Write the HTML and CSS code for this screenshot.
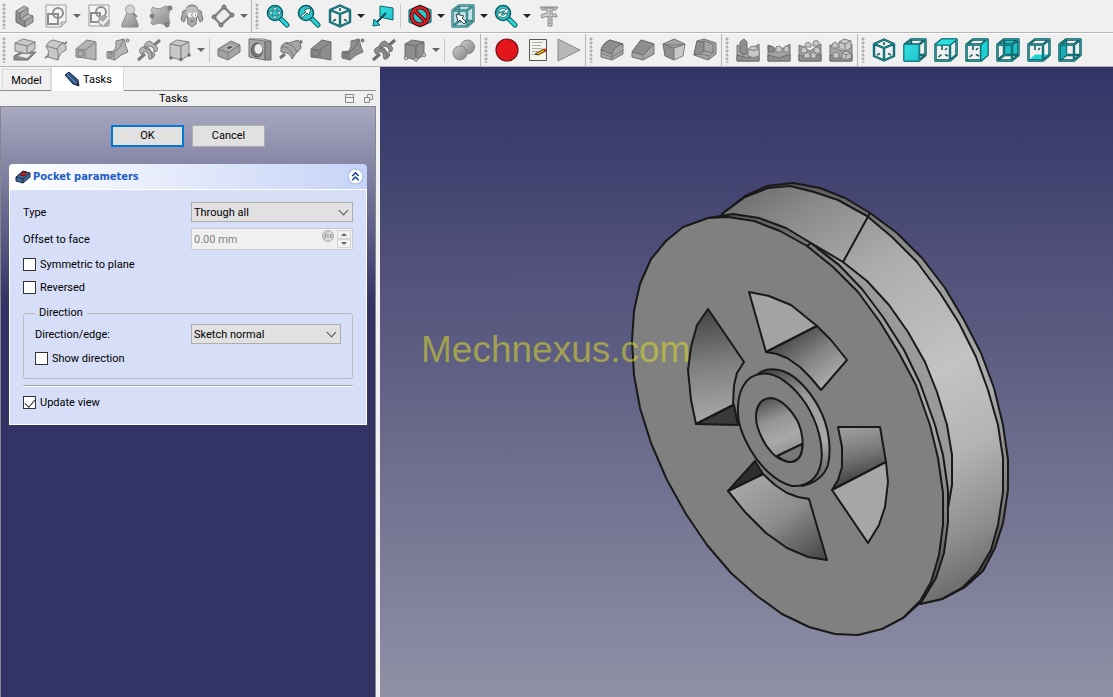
FILE: index.html
```html
<!DOCTYPE html>
<html lang="en">
<head>
<meta charset="utf-8">
<meta name="viewport" content="width=device-width, initial-scale=1">
<title>Pocket parameters</title>
<link rel="stylesheet" href="styles.css">
</head>
<body>
<svg class="defs" aria-hidden="true">
  <defs>
    <linearGradient id="teal" x1="0" y1="0" x2="1" y2="1"><stop offset="0" stop-color="#34e0e2"/><stop offset="1" stop-color="#20c4ca"/></linearGradient>
    <linearGradient id="grey" x1="0" y1="0" x2="1" y2="1"><stop offset="0" stop-color="#c9c9c9"/><stop offset="1" stop-color="#858585"/></linearGradient>
    <path id="iso" d="M12 1.500L22 6V18L12 22.500L2 18V6ZM2 6L12 10L22 6M12 10V22"/>
    <path id="box" d="M1.500 6.500H16V22.500H1.500ZM1.500 6.500L8 1.500H22.500V17L16 22.500M16 6.500L22.500 1.500"/>
    <path id="boxback" d="M8 2V17H22M8 17L2 22"/>
    <g id="isocube"><path class="axis" d="M12 4V7M5 17L8 15.500M19 17L16 15.500"/><use href="#iso" class="tube-out"/><use href="#iso" class="tube-in"/></g>
    <g id="boxfront"><use href="#box" class="tube-out"/><use href="#box" class="tube-in"/></g>
    <g id="boxrear"><use href="#boxback" class="tube-out"/><use href="#boxback" class="tube-in"/></g>
    <path id="ticks" class="axis" d="M8 8V12M4.500 19L7.500 16.500M11 16.500L14 18M11 12L13 10"/>
    <g id="lens"><path class="handle-out" d="M14 14L21 21"/><path class="handle-in" d="M14 14L21 21"/><circle cx="9" cy="9" r="7.500" fill="#2fc6cb" stroke="#0a6266" stroke-width="1.600"/></g>
    <g id="wheelpad"><path class="g" d="M1 18V7L6 9L12 13L23 6V23H1Z"/><path class="d" d="M1 17L12 20L23 16V23H1Z"/></g>
    <g id="loft"><path d="M1 11L12 2L21 4V22L10 20L1 19Z"/><path d="M1 11L10 12L21 4M10 12V20"/><path d="M3 13H8V18H3Z"/></g>
    <g id="sweep"><path d="M1 14L8 13Q11 9 10 3L18 1Q20 10 22 14Q15 16 9 22L1 20Z"/><path d="M1 14L8 15V21M8 15Q15 10 18 1"/><path d="M3 16H6V19H3Z"/><circle cx="21.500" cy="2.500" r="1.500"/></g>
    <g id="helix"><path d="M1 22L8 16M15 9L23 2" class="shaft"/><path d="M4 16Q0 11 6 9Q13 8 14 14L15 20Q17 15 12 12L7 10Q7 4 13 3L18 7Q22 9 20 13L17 14Q18 9 12 8Q8 8 10 11L18 16Q16 22 12 21L11 15Q7 12 5 16Z"/></g>
    <g id="revolve"><path d="M1 20L6 16M18 7L23 3" class="shaft"/><path d="M2 9Q5 3 10 5L19 2Q22 4 22 10Q20 13 18 14L13 21Q11 14 2 14Z"/><path d="M2 9Q10 7 14 18M7 5Q15 7 18 14"/></g>
    <g id="primitive"><path d="M2 6L13 8V22L2 19Z"/><path d="M2 6L9 2L21 4L13 8Z"/><path d="M13 8L21 4V17L13 22Z"/></g>
    <g id="corners"><circle cx="3" cy="20" r="1.800"/><circle cx="13" cy="21.500" r="1.800"/><circle cx="21" cy="17" r="1.800"/></g>
  </defs>
</svg>

<header class="toolbars">
  <div class="toolbar-row">
    <div class="toolbar">
      <span class="grip"></span>
      <button class="tool" aria-label="Body"><svg viewBox="0 0 24 24"><path class="d" d="M3 7L7 9V15L12 17V23L3 18Z"/><path class="m" d="M3 7L11 2L15 4L7 9ZM7 15L15 10L20 12L12 17Z"/><path class="g" d="M7 9L15 4V10L7 15ZM12 17L20 12V18L12 23Z"/></svg></button>
      <button class="tool" aria-label="Create sketch"><svg viewBox="0 0 24 24"><path d="M2 1H22V18L17 23H2Z" fill="#f4f4f4" stroke="#9b9b9b"/><path d="M17 23V18H22" fill="#ccc" stroke="#9b9b9b"/><rect class="sk" x="4" y="10" width="10" height="10"/><circle class="sk" cx="14" cy="9" r="5"/></svg></button>
      <button class="menu-arrow off" aria-label="Sketch menu"></button>
      <button class="tool" aria-label="Validate sketch"><svg viewBox="0 0 24 24"><path d="M2 1H22V22H2Z" fill="#f4f4f4" stroke="#9b9b9b"/><rect class="sk" x="4" y="9" width="9" height="9"/><circle class="sk" cx="14" cy="8" r="5"/><circle cx="17" cy="17" r="6" fill="#aaa"/><path d="M13 17L16 20L22 13" fill="none" stroke="#eee" stroke-width="2.500"/></svg></button>
      <button class="tool" aria-label="Check geometry"><svg viewBox="0 0 24 24"><path d="M9 9H15L20 20V23H4V20Z" fill="url(#grey)" stroke="#8a8a8a"/><path d="M15 9L19 13" stroke="#888" stroke-width="2"/><circle cx="12" cy="5.500" r="4.500" fill="#d6d6d6" stroke="#999"/></svg></button>
      <button class="tool" aria-label="Shape binder"><svg viewBox="0 0 24 24"><path d="M4 3Q10 7 16 2L22 3Q18 11 21 19Q18 21 18 22L14 20Q9 18 4 21Q1 20 3 16Q5 10 2 6Z" fill="url(#grey)" stroke="#999"/><circle class="d" cx="3" cy="12" r="2"/><circle class="d" cx="21" cy="4" r="2"/><circle class="d" cx="18" cy="21" r="2"/></svg></button>
      <button class="tool" aria-label="Clone"><svg viewBox="0 0 24 24"><path d="M6 6Q7 1 12 1T18 6L21 7L23 16L20 18L17 11L16 20L12 23L8 20L7 11L4 18L1 16L3 7Z" fill="#aaa" stroke="#777"/><path d="M6 5Q12 0 18 5L17 12H7Z" fill="#bebebe"/><circle cx="10" cy="11" r="2.400" fill="#eee"/><circle cx="15" cy="11" r="2.400" fill="#eee"/><path d="M11 11H12M15 11H16M10 16L12 18L14 16" stroke="#666" fill="none"/></svg></button>
      <button class="tool" aria-label="Datum plane"><svg viewBox="0 0 24 24"><path d="M3 13L13 3L21 11L10 21Z" fill="#eee" stroke="#888" stroke-width="2.500"/><g class="d"><circle cx="3" cy="13" r="2"/><circle cx="13" cy="3" r="2"/><circle cx="21" cy="11" r="2"/><circle cx="10" cy="21" r="2"/></g></svg></button>
      <button class="menu-arrow off" aria-label="Datum menu"></button>
    </div>
    <div class="toolbar last">
      <span class="grip"></span>
      <button class="tool" aria-label="Fit all"><svg viewBox="0 0 24 24"><use href="#lens"/><path d="M9 3L11.500 6H6.500ZM9 15L11.500 12H6.500ZM3 9L6 6.500V11.500ZM15 9L12 6.500V11.500Z" fill="#fff" stroke="#174b4d" stroke-width=".7"/></svg></button>
      <button class="tool" aria-label="Fit selection"><svg viewBox="0 0 24 24"><use href="#lens"/><path d="M4 12L9 8L7 6L14 4L12 11L10 9L5 14Z" fill="#fff" stroke="#174b4d" stroke-width=".8"/></svg></button>
      <button class="tool" aria-label="Isometric view"><svg viewBox="0 0 24 24"><use href="#isocube"/></svg></button>
      <button class="menu-arrow" aria-label="View menu"></button>
      <button class="tool" aria-label="Align to selection"><svg viewBox="0 0 24 24"><path d="M9 2L22 4V16L9 13Z" fill="url(#teal)" stroke="#0a6266"/><path d="M15 9L5 19" stroke="#0a5357" stroke-width="2.200"/><path d="M2 22L3 15L9 21Z" fill="#22cdd1" stroke="#0a6266"/></svg></button>
      <span class="divider"></span>
      <button class="tool" aria-label="Draw style"><svg viewBox="0 0 24 24"><path d="M12 1L23 6V18L12 23L1 18V6Z" fill="#2bc7cb" stroke="#075559"/><circle cx="12" cy="12" r="8.500" fill="none" stroke="#3b0c0c" stroke-width="4"/><path d="M6 6L18 18" stroke="#3b0c0c" stroke-width="4"/><circle cx="12" cy="12" r="8.500" fill="none" stroke="#df1c22" stroke-width="2.400"/><path d="M6 6L18 18" stroke="#df1c22" stroke-width="2.400"/></svg></button>
      <button class="menu-arrow" aria-label="Draw style menu"></button>
      <button class="tool" aria-label="Box selection"><svg viewBox="0 0 24 24"><path d="M2 7L8 2H22V17L16 22H2Z" fill="#c4e4e5"/><g class="muted"><use href="#boxrear"/><use href="#boxfront"/></g><path d="M5 10L13 12L11 14L15 18L13 20L9 16L7 18Z" fill="#fff" stroke="#345"/></svg></button>
      <button class="menu-arrow" aria-label="Selection menu"></button>
      <button class="tool" aria-label="Refresh view"><svg viewBox="0 0 24 24"><use href="#lens"/><path d="M4 8Q8 2 12 6L14 4V9H9L11 7Q8 6 7 8ZM14 10Q10 16 6 12L4 14V9H9L7 11Q10 12 11 10Z" fill="#fff" stroke="#174b4d" stroke-width=".6"/></svg></button>
      <button class="menu-arrow" aria-label="Refresh menu"></button>
      <button class="tool" aria-label="Measure"><svg viewBox="0 0 24 24"><path d="M3 3H21L19 6H15V10H19L20 13L15 12V22H11V12L5 14L4 11L10 9V6H5Z" fill="#d0d0d0" stroke="#888"/><path d="M12 7H14M12 10H14M12 13H14M12 16H14M12 19H14M6 4H18" stroke="#777"/></svg></button>
    </div>
  </div>
  <div class="toolbar-row">
    <div class="toolbar">
      <span class="grip"></span>
      <button class="tool" aria-label="Pad"><svg viewBox="0 0 24 24"><path class="d" d="M1 18L8 14H23L15 22H1Z"/><path fill="#eee" d="M5 18L9 16H18L14 20Z"/><path class="l" d="M2 5L10 1L22 4V11L14 16L2 13Z"/><path class="line" d="M2 5L14 8L22 4M14 8V16"/></svg></button>
      <button class="tool" aria-label="Revolution"><svg viewBox="0 0 24 24"><path d="M1 20L23 4" class="line wide"/><path class="l" d="M2 8Q5 2 9 2L20 5Q23 8 22 12Q15 15 14 22L4 19Q6 13 2 8Z"/><path class="line" d="M2 8L13 11Q15 6 20 5M13 11Q15 15 14 22"/></svg></button>
      <button class="tool" aria-label="Additive loft"><svg viewBox="0 0 24 24"><use class="m" href="#loft"/></svg></button>
      <button class="tool" aria-label="Additive pipe"><svg viewBox="0 0 24 24"><use class="m" href="#sweep"/></svg></button>
      <button class="tool" aria-label="Additive helix"><svg viewBox="0 0 24 24"><use class="m" href="#helix"/></svg></button>
      <button class="tool" aria-label="Additive primitive"><svg viewBox="0 0 24 24"><use class="l" href="#primitive"/><use class="dark" href="#corners"/></svg></button>
      <button class="menu-arrow off" aria-label="Additive menu"></button>
      <span class="divider"></span>
      <button class="tool" aria-label="Pocket"><svg viewBox="0 0 24 24"><path class="g" d="M1 11L14 3L23 7V14L11 22L1 18Z"/><path class="line" d="M1 11L11 15L23 7M11 15V22"/><path d="M8 10L13 7L17 9L12 12Z" fill="#606060" stroke="#ccc"/></svg></button>
      <button class="tool" aria-label="Hole"><svg viewBox="0 0 24 24"><path class="g" d="M1 1L17 3V22L1 19Z"/><path class="d" d="M17 3L23 3V22H17Z"/><path class="line" d="M1 1H15L23 3"/><ellipse cx="9" cy="12" rx="5.500" ry="7" fill="#777" stroke="#555"/><ellipse cx="10.500" cy="11" rx="4" ry="5" fill="#ececec"/></svg></button>
      <button class="tool" aria-label="Groove"><svg viewBox="0 0 24 24"><use class="g" href="#revolve"/></svg></button>
      <button class="tool" aria-label="Subtractive loft"><svg viewBox="0 0 24 24"><use class="d" href="#loft"/></svg></button>
      <button class="tool" aria-label="Subtractive pipe"><svg viewBox="0 0 24 24"><use class="d" href="#sweep"/></svg></button>
      <button class="tool" aria-label="Subtractive helix"><svg viewBox="0 0 24 24"><use class="d" href="#helix"/></svg></button>
      <button class="tool" aria-label="Subtractive primitive"><svg viewBox="0 0 24 24"><use class="d" href="#primitive"/><use class="l" href="#corners"/></svg></button>
      <button class="menu-arrow off" aria-label="Subtractive menu"></button>
      <span class="divider"></span>
      <button class="tool" aria-label="Boolean"><svg viewBox="0 0 24 24"><circle cx="15.500" cy="9" r="7" fill="url(#grey)" stroke="#888"/><circle cx="8" cy="15" r="7" fill="url(#grey)" stroke="#888"/></svg></button>
    </div>
    <div class="toolbar">
      <span class="grip"></span>
      <button class="tool" aria-label="Record macro"><svg viewBox="0 0 24 24"><circle cx="12" cy="12" r="11" fill="#e3171b" stroke="#7a1214" stroke-width="1.200"/></svg></button>
      <button class="tool" aria-label="Macros"><svg viewBox="0 0 24 24"><path d="M3.500 1.500H20.500V22.500H3.500Z" fill="#f5f5ee" stroke="#555"/><path d="M6 4.500H17M6 7.500H15M6 10.500H16M6 13.500H12M6 16.500H10" stroke="#aaa"/><path d="M9 16L18 11L20 13L12 17Z" fill="#eab414" stroke="#4b3b16"/><path d="M18 11L20 13" stroke="#c22" stroke-width="2"/></svg></button>
      <button class="tool" aria-label="Run macro"><svg viewBox="0 0 24 24"><path d="M1 1V23L23 12Z" fill="#b8b8b8" stroke="#888"/></svg></button>
    </div>
    <div class="toolbar">
      <span class="grip"></span>
      <button class="tool" aria-label="Fillet"><svg viewBox="0 0 24 24"><path class="g" d="M1 19V12Q3 5 10 2L23 6V16L12 22Z"/><path class="d" d="M1 12Q3 5 10 2L23 6Q14 8 12 16Z"/><path class="line" d="M1 15L12 19L23 12M12 16V22"/></svg></button>
      <button class="tool" aria-label="Chamfer"><svg viewBox="0 0 24 24"><path class="g" d="M1 19V14L10 2L23 6V16L12 22Z"/><path class="d" d="M1 14L10 2L23 6L12 17Z"/><path class="line" d="M12 17V22"/></svg></button>
      <button class="tool" aria-label="Draft"><svg viewBox="0 0 24 24"><path class="d" d="M1 6L12 10V22L3 18Z"/><path class="l" d="M12 10L23 6L21 18L12 22Z"/><path class="g" d="M1 6L12 1L23 6L12 10Z"/><path class="line" d="M1 6L12 7L23 6"/></svg></button>
      <button class="tool" aria-label="Thickness"><svg viewBox="0 0 24 24"><path class="g" d="M4 3L11 1L23 5V16L15 22L1 17Z"/><path class="d" d="M8 4L11 3V13L7 16L1 17L4 3Z"/><path class="g" d="M11 3L20 6V15L11 13Z"/><path class="line" d="M7 16L16 18L20 15M16 18L15 22"/></svg></button>
    </div>
    <div class="toolbar">
      <span class="grip"></span>
      <button class="tool" aria-label="Mirrored"><svg viewBox="0 0 24 24"><use href="#wheelpad"/><path class="d" d="M4 4L8 1L11 4V15L7 17L4 14Z"/><path class="l" d="M12 11Q17 5 23 11V18Q17 21 12 18Z"/><path class="line" d="M12 11Q17 14 23 11"/></svg></button>
      <button class="tool" aria-label="Linear pattern"><svg viewBox="0 0 24 24"><use href="#wheelpad"/><g class="l"><path class="d" d="M1 9L5 8L7 10V14L2 14Z"/><path d="M9 9L12 8L15 10V14H9ZM17 9L20 8L22 10V14H17Z"/></g></svg></button>
      <button class="tool" aria-label="Polar pattern"><svg viewBox="0 0 24 24"><use href="#wheelpad"/><g class="l"><path d="M7 6L10 4L13 6V9H7ZM15 4L18 2L21 4V8H15ZM3 11L6 9L9 11V15H3ZM16 10L19 9L22 11V15H16ZM6 16L9 14L12 16V20H6ZM13 15L16 14L18 16V20H13Z"/></g></svg></button>
      <button class="tool" aria-label="Multi transform"><svg viewBox="0 0 24 24"><use href="#wheelpad"/><g class="l"><path d="M10 4L15 1L22 3V10L16 13L10 10ZM3 6L6 4L9 6V10H3ZM4 16L7 14L10 16V20H4ZM13 15L17 13L22 15V20L17 22L13 20Z"/></g><path class="line" d="M10 4L16 6L22 3M16 6V13M13 15L17 17L22 15M17 17V22"/></svg></button>
    </div>
    <div class="toolbar last">
      <span class="grip"></span>
      <button class="tool" aria-label="Axonometric"><svg viewBox="0 0 24 24"><use href="#isocube"/></svg></button>
      <button class="tool" aria-label="Front"><svg viewBox="0 0 24 24"><use href="#boxrear"/><use href="#boxfront"/><path d="M1 6.500H16V23H1Z" fill="url(#teal)" stroke="#0c8388"/></svg></button>
      <button class="tool" aria-label="Top"><svg viewBox="0 0 24 24"><use href="#ticks"/><use href="#boxfront"/><path d="M1 7L8 1H23L16 7Z" fill="#2ddde0" stroke="#0c8388"/></svg></button>
      <button class="tool" aria-label="Right"><svg viewBox="0 0 24 24"><use href="#ticks"/><use href="#boxfront"/><path d="M16 7L23 1V17L16 23Z" fill="#20cfd3" stroke="#0c7478"/></svg></button>
      <button class="tool" aria-label="Rear"><svg viewBox="0 0 24 24"><path d="M8 2H22V17H8Z" fill="#1fbfc4"/><use href="#boxrear"/><use href="#boxfront"/></svg></button>
      <button class="tool" aria-label="Bottom"><svg viewBox="0 0 24 24"><path d="M2 22L8 16.500H22L16 22Z" fill="#20d5d8"/><path class="axis" d="M8 8V12M11 12L13 10"/><use href="#boxfront"/></svg></button>
      <button class="tool" aria-label="Left"><svg viewBox="0 0 24 24"><use href="#boxrear"/><path d="M2 7L8 2V17L2 22Z" fill="#1aaeb4"/><use href="#boxfront"/></svg></button>
    </div>
  </div>
</header>

<main class="workspace">
  <aside class="side">
    <nav class="tabs">
      <button class="tab">Model</button>
      <button class="tab active"><svg class="pencil" viewBox="0 0 16 16"><path d="M1 4L5 1L14 9L15 15L9 13Z" fill="#31558a" stroke="#182b48"/><path d="M3 3L12 12" stroke="#6f92c5"/><path d="M12 14L15 15L14 11Z" fill="#3b3022"/></svg>Tasks</button>
    </nav>
    <div class="dock-title">
      <span class="dock-name">Tasks</span>
      <button class="dock-btn" aria-label="Collapse"><svg viewBox="0 0 9 9"><path d="M.5 .5H8.500V8.500H.5ZM.5 3.500H8.500"/></svg></button>
      <button class="dock-btn" aria-label="Float"><svg viewBox="0 0 9 9"><path d="M.5 3.500H5.500V8.500H.5ZM3.500 3.500V.5H8.500V5.500H5.500"/></svg></button>
    </div>
    <section class="tasks">
      <div class="actions">
        <button class="btn primary">OK</button>
        <button class="btn">Cancel</button>
      </div>
      <form class="card">
        <h2 class="card-head">
          <svg class="card-icon" viewBox="0 0 16 14"><path d="M1 7L8 1L15 3V7L8 13L1 11Z" fill="#426a9c" stroke="#172a43"/><path d="M1 7L8 9L15 3M8 9V13" fill="none" stroke="#172a43"/><path d="M5 5L8 2L12 3L9 6Z" fill="#d61f1f" stroke="#651414"/></svg>
          <span class="card-title">Pocket parameters</span>
          <button type="button" class="fold" aria-label="Collapse parameters"><svg viewBox="0 0 16 16"><circle cx="8" cy="8" r="7" fill="#fff" stroke="#a9b6dd"/><path d="M5 7.500L8 4.500L11 7.500M5 11.500L8 8.500L11 11.500" fill="none" stroke="#173f9b" stroke-width="1.500"/></svg></button>
        </h2>
        <div class="card-body">
          <div class="field"><label for="type">Type</label><select id="type"><option>Through all</option></select></div>
          <div class="field offset"><label for="offset">Offset to face</label>
            <div class="spin"><input id="offset" type="text" value="0.00 mm" disabled>
              <svg class="fx" viewBox="0 0 12 12"><circle cx="6" cy="6" r="5.500" fill="#ddd" stroke="#aaa"/><path d="M3 9V5Q3 3 5 3M2 6H5M6 4V8M8 4L10 8M10 4L8 8" fill="none" stroke="#999"/></svg>
              <div class="steps"><button type="button" disabled aria-label="Increase"><i class="up"></i></button><button type="button" disabled aria-label="Decrease"><i class="down"></i></button></div>
            </div>
          </div>
          <label class="check"><input type="checkbox">Symmetric to plane</label>
          <label class="check"><input type="checkbox">Reversed</label>
          <fieldset class="group">
            <legend>Direction</legend>
            <div class="field"><label for="edge">Direction/edge:</label><select id="edge"><option>Sketch normal</option></select></div>
            <label class="check"><input type="checkbox">Show direction</label>
          </fieldset>
          <hr>
          <label class="check"><input type="checkbox" checked>Update view</label>
        </div>
      </form>
    </section>
  </aside>

  <section class="viewport" aria-label="3D view">
    <svg class="scene" viewBox="380 67 733 630" preserveAspectRatio="xMidYMid meet">
      <defs>
        <linearGradient id="groove" gradientUnits="userSpaceOnUse" x1="730" y1="200" x2="960" y2="600">
          <stop offset="0" stop-color="#707070"/><stop offset=".1" stop-color="#8a8a8a"/><stop offset=".28" stop-color="#acacac"/><stop offset=".55" stop-color="#c3c3c3"/><stop offset=".72" stop-color="#b4b4b4"/><stop offset=".88" stop-color="#8e8e8e"/><stop offset="1" stop-color="#666"/>
        </linearGradient>
        <linearGradient id="rim" gradientUnits="userSpaceOnUse" x1="780" y1="185" x2="960" y2="600">
          <stop offset="0" stop-color="#555"/><stop offset=".3" stop-color="#999"/><stop offset=".6" stop-color="#acacac"/><stop offset=".85" stop-color="#777"/><stop offset="1" stop-color="#333"/>
        </linearGradient>
        <linearGradient id="p1" gradientUnits="userSpaceOnUse" x1="795" y1="332" x2="828" y2="380"><stop offset="0" stop-color="#4a4a4a"/><stop offset=".5" stop-color="#808080"/><stop offset="1" stop-color="#a8a8a8"/></linearGradient>
        <linearGradient id="p2" gradientUnits="userSpaceOnUse" x1="704" y1="309" x2="718" y2="418"><stop offset="0" stop-color="#424242"/><stop offset=".5" stop-color="#7e7e7e"/><stop offset="1" stop-color="#a6a6a6"/></linearGradient>
        <linearGradient id="p3" gradientUnits="userSpaceOnUse" x1="750" y1="475" x2="812" y2="562"><stop offset="0" stop-color="#a8a8a8"/><stop offset=".5" stop-color="#8c8c8c"/><stop offset="1" stop-color="#4c4c4c"/></linearGradient>
        <linearGradient id="p4" gradientUnits="userSpaceOnUse" x1="852" y1="425" x2="866" y2="482"><stop offset="0" stop-color="#a0a0a0"/><stop offset=".5" stop-color="#787878"/><stop offset="1" stop-color="#3d3d3d"/></linearGradient>
        <linearGradient id="bore" gradientUnits="userSpaceOnUse" x1="767" y1="397" x2="793" y2="460"><stop offset="0" stop-color="#4e4e4e"/><stop offset=".35" stop-color="#949494"/><stop offset=".65" stop-color="#a9a9a9"/><stop offset="1" stop-color="#888"/></linearGradient>
        <linearGradient id="hub" gradientUnits="userSpaceOnUse" x1="768" y1="370" x2="822" y2="485"><stop offset="0" stop-color="#454545"/><stop offset=".3" stop-color="#9a9a9a"/><stop offset=".7" stop-color="#aaa"/><stop offset="1" stop-color="#555"/></linearGradient>
      </defs>
      <g class="model">
        <path fill="url(#rim)" d="M722 214L745 196L767 186L793 183L820 188L845 198L870 213L897 233L922 258L945 288L964 320L981 353L994 388L1003 425L1008 460L1008 490L1003 523L995 548L983 571L965 587L942 599L920 604Z"/>
        <path fill="url(#groove)" d="M722 214L745 197L768 188L790 186L814 192L838 200L867 216L892 237L917 262L940 293L959 323L976 357L988 390L998 425L1003 458L1003 492L998 525L991 550L978 572L962 588L942 599L920 604Z"/>
        <path class="edge" d="M870 213L843 262L838 265"/>
        <path fill="#9a9a9a" d="M811 243L843 262L867 281L889 305L908 332L925 362L937 392L947 425L952 455L952 485L948 508L930 580L700 400Z"/>
        <path fill="url(#rim)" d="M708 218L733 214L759 218L786 228L811 243L839 265L862 289L883 317L904 350L920 383L935 425L943 455L948 490L948 522L944 553L936 578L922 601L903 618Z"/>
        <path fill="#808080" d="M708 218L683 227L666 241L651 259L640 284L634 311L632 341L634 375L640 408L651 443L667 480L686 514L707 545L731 573L757 596L782 614L809 627L835 634L858 635L882 629L903 618L920 601L931 582L939 555L943 525L943 493L938 458L930 425L916 385L899 353L880 322L858 292L833 267L807 246L780 231L754 221L728 217Z"/>
        <path class="edge" d="M807 246L811 243M817 248L839 265"/>

        <path fill="#a3a3a3" d="M749 292L769 296L791 305L817 326L766 352Z"/>
        <path fill="url(#p1)" d="M817 326L831 340L847 360L821 390L811 378L800 367L787 358L777 354L766 352Z"/>
        <path fill="url(#p2)" d="M708 309L744 362L737 373L734 385L733 405L696 424L691 400L688 370L691 347L697 325Z"/>
        <path fill="#3a3a3a" d="M696 424L734 405L738 425Z"/>
        <path fill="url(#p3)" d="M728 491L745 512L766 533L787 548L808 557L827 560L809 499L798 497L787 493L775 485L763 474Z"/>
        <path fill="#2e2e2e" d="M755 461L763 474L728 491Z"/>
        <path fill="url(#p4)" d="M838 427L880 427L886 462L832 490L838 480L842 467L842 447Z"/>
        <path fill="#a6a6a6" d="M886 462L888 482L885 507L879 525L868 543L832 490Z"/>

        <path fill="url(#hub)" d="M758 374C764 369 773 368 783 371C799 377 814 396 822 414C830 432 831 452 828 465C824 477 815 483 802 486L775 450Z"/>
        <path fill="#808080" d="M738 413C737 392 745 376 760 374C776 371 794 386 806 404C818 423 824 446 821 463C818 479 807 487 792 486C775 482 759 465 750 449C742 435 738 424 738 413Z"/>
        <path fill="url(#bore)" d="M756 417C756 405 762 398 771 398C782 399 792 411 798 422C803 433 804 446 801 454C798 461 792 463 785 461C776 459 767 449 762 438C758 430 756 424 756 417Z"/>
        <path fill="#777" d="M777 456L802 444C803 455 798 462 789 462Q784 461 777 456Z"/>
      </g>
      <text class="watermark" x="421" y="362">Mechnexus.com</text>
    </svg>
  </section>
</main>
</body>
</html>
```
FILE: styles.css
```css
* { box-sizing: border-box; }

body {
  margin: 0;
  height: 100vh;
  display: flex;
  flex-direction: column;
  overflow: hidden;
  background: #f0f0f0;
  color: #000;
  font: 11px/14px Roboto, "Liberation Sans", sans-serif;
}

button, input, select { font: inherit; color: inherit; }
button { padding: 0; border: 0; background: none; }
.defs { position: absolute; width: 0; height: 0; }

/* Toolbars */
.toolbar-row {
  display: flex;
  height: 33px;
  border-bottom: 1px solid #b4b4b4;
}
.toolbar-row + .toolbar-row { height: 34px; border-top: 1px solid #fff; }
.toolbar {
  display: flex;
  align-items: center;
  padding-right: 1px;
  border-right: 1px solid #b4b4b4;
  margin-right: 1px;
}
.toolbar.last { border-right: 0; }
.grip {
  width: 9px;
  height: 26px;
  background: radial-gradient(circle at 4px 2px, #b0b0b0 1px, transparent 2px) 0 0 / 9px 4px;
}
.tool { display: grid; place-items: center; width: 31px; height: 30px; }
.tool svg { width: 24px; height: 24px; }
.divider { width: 1px; height: 24px; margin: 0 3px 0 2px; background: #c8c8c8; }
.menu-arrow { display: grid; place-items: center; width: 12px; height: 30px; }
.menu-arrow::before {
  content: "";
  border: 4px solid transparent;
  border-top-color: #222;
  border-bottom: 0;
}
.menu-arrow.off::before { border-top-color: #666; }

/* Icon paint */
.l { fill: #c8c8c8; stroke: #808080; }
.m { fill: #b4b4b4; stroke: #7c7c7c; }
.g { fill: #a4a4a4; stroke: #747474; }
.d { fill: #8e8e8e; stroke: #6c6c6c; }
.dark { fill: #707070; }
.line { fill: none; stroke: #7c7c7c; }
.wide { stroke-width: 2; }
.shaft { stroke-width: 3; }
.sk { fill: none; stroke: #8d8d8d; stroke-width: 2; }
.tube-out { fill: none; stroke: #0b5558; stroke-width: 2.4; stroke-linejoin: round; }
.tube-in { fill: none; stroke: #1fa3a8; stroke-width: .8; }
.axis { fill: none; stroke: #175c60; stroke-width: 1.6; }
.handle-out { stroke: #0a6266; stroke-width: 5; stroke-linecap: round; }
.handle-in { stroke: #2bd6da; stroke-width: 3; stroke-linecap: round; }
.muted { opacity: .75; }

/* Workspace */
.workspace { flex: 1; display: flex; min-height: 0; }
.side { flex: 0 0 380px; display: flex; flex-direction: column; padding-right: 4px; }
.tabs {
  display: flex;
  align-items: flex-end;
  height: 24px;
  padding-left: 2px;
  border-bottom: 1px solid #8e8e8e;
}
.tab {
  min-width: 49px;
  height: 21px;
  padding: 2px 8px 0;
  border: 1px solid #d9d9d9;
  border-bottom: 0;
}
.tab.active {
  display: flex;
  align-items: center;
  gap: 3px;
  min-width: 71px;
  height: 24px;
  margin-bottom: -1px;
  padding: 2px 11px 0 12px;
  border-top: 0;
  background: #fff;
}
.pencil { width: 16px; height: 16px; margin-bottom: 2px; }
.dock-title { display: flex; align-items: center; gap: 10px; height: 15px; padding-right: 3px; }
.dock-name { flex: 1; padding: 1px 0 0 12px; text-align: center; }
.dock-btn { display: flex; }
.dock-btn svg { width: 9px; height: 9px; fill: none; stroke: #888; }

.tasks {
  flex: 1;
  padding: 18px 8px;
  border: 1px solid #85858f;
  border-bottom: 0;
  background: linear-gradient(#a9a9c1, #333366 194px);
}
.actions { display: flex; justify-content: center; gap: 8px; }
.btn { width: 73px; height: 22px; border: 1px solid #adadad; background: #e1e1e1; }
.btn.primary { border: 2px solid #0078d7; }

.card { margin-top: 17px; }
.card-head {
  display: flex;
  align-items: center;
  height: 25px;
  margin: 0;
  padding: 0 3px 0 6px;
  gap: 2px;
  border-radius: 4px 4px 0 0;
  background: linear-gradient(90deg, #fff, #c6d3f7);
  color: #215dc6;
  font: bold 11px/14px "DejaVu Sans Condensed", "DejaVu Sans", sans-serif;
}
.card-icon { width: 16px; height: 14px; }
.card-title { flex: 1; padding-top: 1px; }
.fold { display: flex; }
.fold svg { width: 17px; height: 17px; }
.card-body {
  display: flex;
  flex-direction: column;
  padding: 12px 13px 14px;
  border: 1px solid #fff;
  background: #d6dff7;
}
.field { position: relative; display: flex; align-items: center; }
.field > label { flex: 1; padding-top: 2px; }
.field select, .spin { flex: 0 0 162px; min-width: 0; }
select {
  height: 20px;
  padding: 1px 2px 0;
  border: 1px solid #adadad;
  border-radius: 0;
  appearance: none;
  background: #e1e1e1;
}
.field:has(select)::after {
  content: "";
  position: absolute;
  right: 6px;
  top: 5px;
  width: 6px;
  height: 6px;
  border: solid #555;
  border-width: 0 1px 1px 0;
  transform: rotate(45deg);
  pointer-events: none;
}
.offset { margin: 6px 0 8px; }
.spin {
  display: flex;
  height: 22px;
  padding: 1px;
  border: 1px solid #ccc;
  background: #f0f0f0;
}
.spin input {
  flex: 1;
  width: 0;
  min-width: 0;
  padding: 2px 1px 0;
  border: 0;
  background: none;
  color: #838383;
}
.fx { width: 12px; height: 12px; margin-right: 3px; }
.steps { display: flex; flex-direction: column; width: 14px; }
.steps button { flex: 1; display: grid; place-items: center; border: 1px solid #d5d5d5; }
.up, .down { border: 3px solid transparent; }
.up { border-top: 0; border-bottom-color: #666; }
.down { border-bottom: 0; border-top-color: #666; }

.check { display: flex; align-items: center; gap: 4px; height: 13px; margin-bottom: 10px; }
.check input {
  appearance: none;
  display: grid;
  place-items: center;
  width: 13px;
  height: 13px;
  margin: 0;
  border: 1px solid #333;
  background: #fff;
}
.check input:checked::before {
  content: "";
  width: 5px;
  height: 9px;
  margin-bottom: 3px;
  border: solid #333;
  border-width: 0 1px 1px 0;
  transform: rotate(42deg);
}
.group {
  margin: 2px 0 6px;
  padding: 4px 11px 13px;
  border: 1px solid #bcbcbc;
  border-radius: 3px;
}
.group legend { padding: 0 4px; line-height: 14px; }
.group .field select { flex-basis: 150px; }
.group .check { margin: 8px 0 0; }
hr { width: 100%; margin: 0 0 10px; border: solid #9ca1b2; border-width: 1px 0 0; box-shadow: 0 1px #fff; }
.card-body > .check:last-child { margin: 0 0 1px; }

/* 3D view */
.viewport { flex: 1; min-width: 0; background: linear-gradient(#333366, #9090a6); }
.scene { display: block; width: 100%; height: 100%; }
.model path { stroke: #191919; stroke-width: 2; stroke-linejoin: round; }
.model .edge { fill: none; }
.watermark { font: 37px "Liberation Sans", Arial, sans-serif; fill: #dede24; fill-opacity: .53; }
```
